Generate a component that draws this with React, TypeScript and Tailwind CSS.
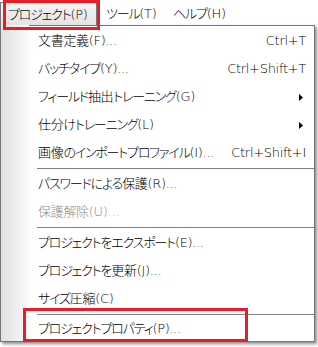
import React from 'react';

interface Item {
  label: string;
  shortcut?: string;
  submenu?: boolean;
  disabled?: boolean;
  separator?: boolean;
  last?: boolean;
}

const items: Item[] = [
  { label: '文書定義(F)...', shortcut: 'Ctrl+T' },
  { label: 'バッチタイプ(Y)...', shortcut: 'Ctrl+Shift+T' },
  { label: 'フィールド抽出トレーニング(G)', submenu: true },
  { label: '仕分けトレーニング(L)', submenu: true },
  { label: '画像のインポートプロファイル(I)...', shortcut: 'Ctrl+Shift+I' },
  { label: '', separator: true },
  { label: 'パスワードによる保護(R)...' },
  { label: '保護解除(U)...', disabled: true },
  { label: '', separator: true },
  { label: 'プロジェクトをエクスポート(E)...' },
  { label: 'プロジェクトを更新(J)...' },
  { label: 'サイズ圧縮(C)' },
  { label: '', separator: true },
  { label: 'プロジェクトプロパティ(P)...', last: true },
];

// kana in the UI font are narrower than in Noto, so tighten those runs
const isKana = (ch: string) => /[\u3040-\u30ff]/.test(ch);

const Label: React.FC<{ text: string }> = ({ text }) => {
  const runs: { t: string; k: boolean }[] = [];
  for (const ch of text) {
    const k = isKana(ch);
    const last = runs[runs.length - 1];
    if (last && last.k === k) last.t += ch;
    else runs.push({ t: ch, k });
  }
  return (
    <span className="whitespace-nowrap">
      {runs.map((r, i) => (
        <span key={i} className={r.k ? 'tracking-[-1.2px]' : ''}>
          {r.t}
        </span>
      ))}
    </span>
  );
};

const App: React.FC = () => {
  return (
    <div className="relative w-[318px] h-[347px] overflow-hidden bg-white text-[13px] tracking-[-0.3px] font-light text-black font-['DejaVu_Sans','Noto_Sans_CJK_JP',sans-serif] [font-feature-settings:'palt']">
      {/* Menu bar */}
      <div className="flex h-[25px] items-end">
        <div className="flex h-[23px] w-[97px] items-center border-l border-t border-r border-[#767676] bg-gradient-to-b from-[#f6f6f6] to-[#e3e3e3] pl-[7px] pt-[1px]">
          <Label text="プロジェクト(P)" />
        </div>
        <div className="ml-[9px] flex h-[23px] w-[67px] items-center pt-[1px]">
          <Label text="ツール(T)" />
        </div>
        <div className="flex h-[23px] items-center pt-[1px]">
          <Label text="ヘルプ(H)" />
        </div>
      </div>

      {/* Dropdown */}
      <div className="flex w-[315px] border-l border-r border-b border-[#767676] bg-white shadow-[2px_2px_3px_rgba(0,0,0,0.45)]">
        <div className="w-[28px] shrink-0 bg-gradient-to-r from-[#e0e0e0] to-[#fbfbfb]" />
        <div className="flex flex-1 flex-col border-t border-[#767676] pt-[1px]">
          {items.map((item, i) =>
            item.separator ? (
              <div key={i} className="flex h-[3px] items-center pl-[8px]">
                <div className="h-px w-full bg-[#808080]" />
              </div>
            ) : (
              <div
                key={i}
                className={`flex items-center justify-between pl-[9px] pr-[8px] ${item.last ? 'h-[25px]' : 'h-[28px]'} ${item.disabled ? 'text-[#8d8d8d]' : ''}`}
              >
                <Label text={item.label} />
                {item.shortcut && <span className="whitespace-nowrap">{item.shortcut}</span>}
                {item.submenu && (
                  <svg width="4" height="7" viewBox="0 0 4 7" className="mr-[3px]">
                    <polygon points="0,0 4,3.5 0,7" fill="#000" />
                  </svg>
                )}
              </div>
            )
          )}
        </div>
      </div>

      {/* Annotation boxes */}
      <div className="pointer-events-none absolute left-[3px] top-0 h-[30px] w-[97px] border-[3px] border-[#e81e25]" />
      <div className="pointer-events-none absolute left-[23px] top-[308px] h-[34px] w-[225px] border-[3px] border-[#e81e25]" />
    </div>
  );
};

export default App;
